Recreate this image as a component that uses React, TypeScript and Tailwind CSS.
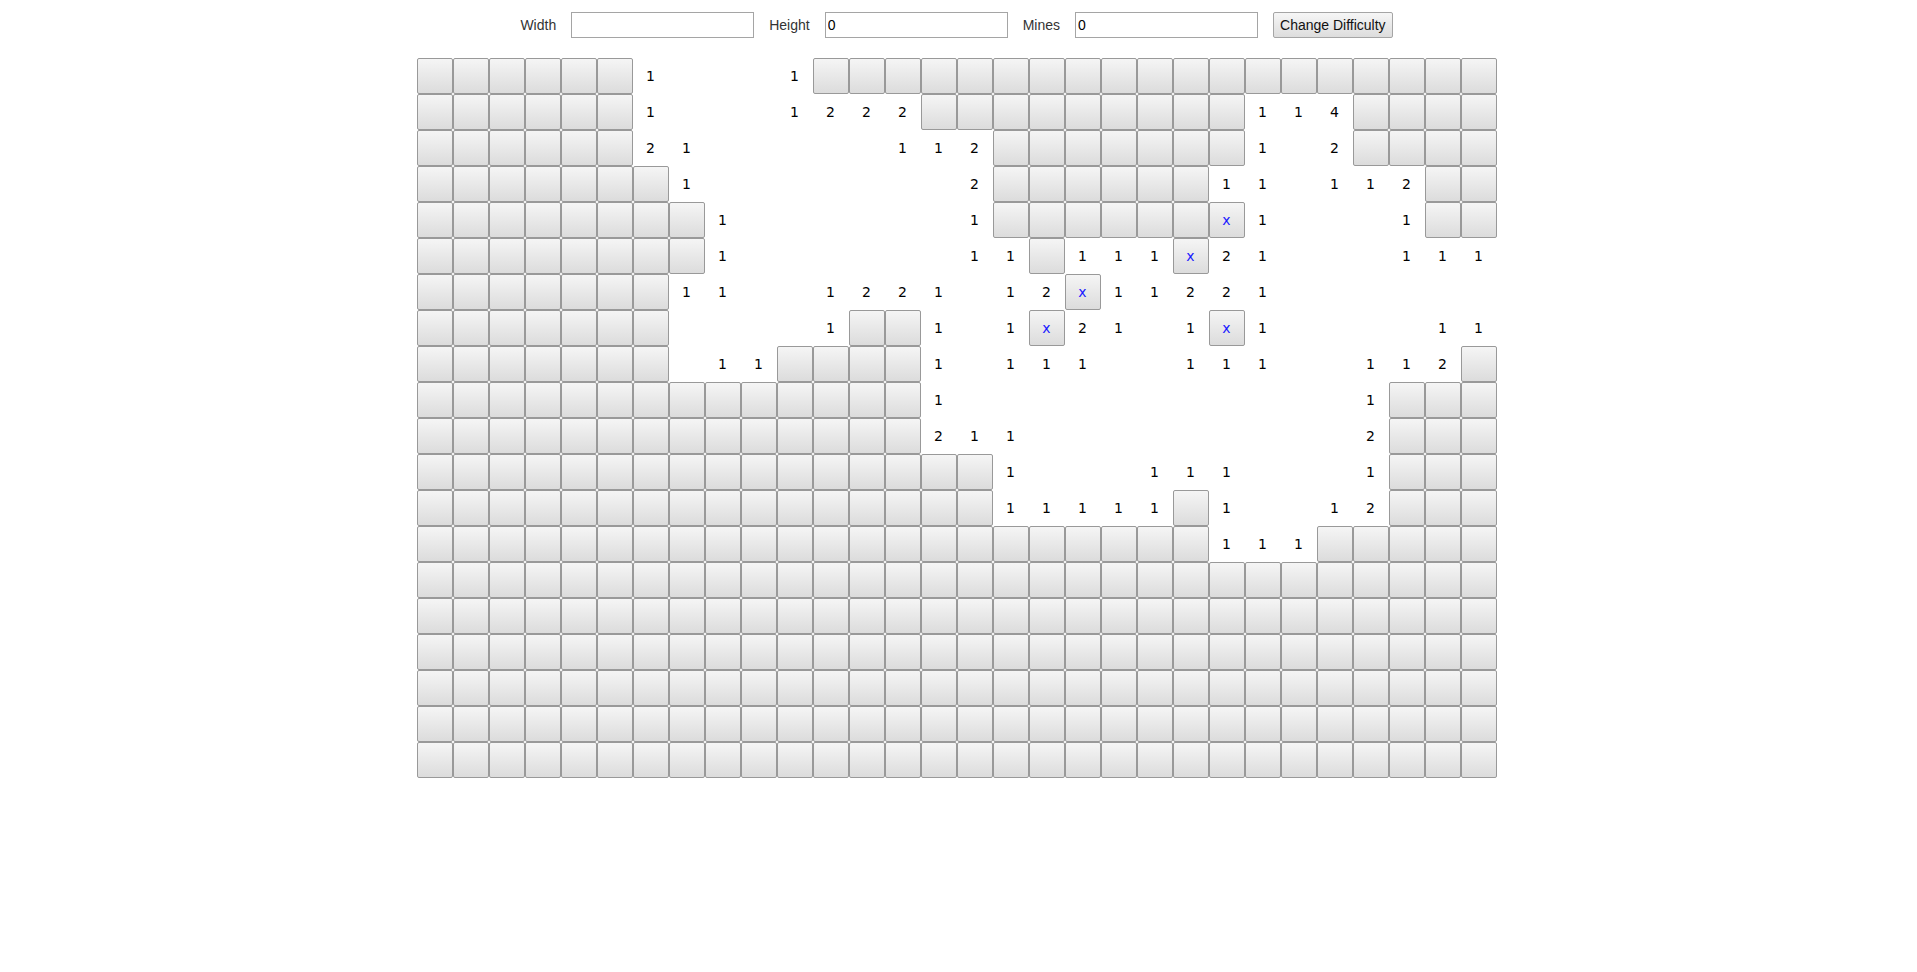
import React from 'react';

// # covered, . opened blank, x flagged, digits = neighbour count
const board = [
  '######1...1###################',
  '######1...1222#########114####',
  '######21.....112#######1.2####',
  '#######1.......2######11.112##',
  '########1......1######x1...1##',
  '########1......11#111x21...111',
  '#######11..1221.12x11221......',
  '#######....1##1.1x21.1x1....11',
  '#######.11####1.111..111..112#',
  '##############1...........1###',
  '##############211.........2###',
  '################1...111...1###',
  '################11111#1..12###',
  '######################111#####',
  '##############################',
  '##############################',
  '##############################',
  '##############################',
  '##############################',
  '##############################',
];

function Cell({ v }: { v: string }) {
  if (v === '#' || v === 'x') {
    return (
      <div className="flex h-[36px] w-[36px] items-center justify-center rounded-[2px] border border-[#999] bg-gradient-to-b from-[#f5f5f5] to-[#dcdcdc] text-[14px] text-[#1a1aff]">
        {v === 'x' ? 'x' : null}
      </div>
    );
  }
  return (
    <div className="flex h-[36px] w-[36px] items-center justify-center text-[14px] text-black">
      {v === '.' ? null : v}
    </div>
  );
}

function Field({ label, value }: { label: string; value: string }) {
  return (
    <>
      <label className="text-[14px] text-[#333]">{label}</label>
      <input
        readOnly
        value={value}
        className="h-[26px] w-[183px] border border-[#a5a5a5] bg-white px-[2px] text-[14px] text-black outline-none"
      />
    </>
  );
}

export default function App() {
  return (
    <div className="min-h-screen bg-white pr-[4px]" style={{ fontFamily: '"Liberation Sans", Arial, sans-serif' }}>
      <div className="flex items-center justify-center gap-[15px] pt-[12px]">
        <Field label="Width" value="" />
        <Field label="Height" value="0" />
        <Field label="Mines" value="0" />
        <button className="h-[26px] rounded-[2px] border border-[#a5a5a5] bg-gradient-to-b from-[#f6f6f6] to-[#dddddd] px-[6px] text-[14px] text-[#111]">
          Change Difficulty
        </button>
      </div>

      <div
        className="mx-auto mt-[20px] grid w-[1080px] grid-cols-[repeat(30,36px)]"
        style={{ fontFamily: '"DejaVu Sans", sans-serif' }}
      >
        {board.map((row, r) =>
          row.split('').map((v, c) => <Cell key={`${r}-${c}`} v={v} />)
        )}
      </div>
    </div>
  );
}
